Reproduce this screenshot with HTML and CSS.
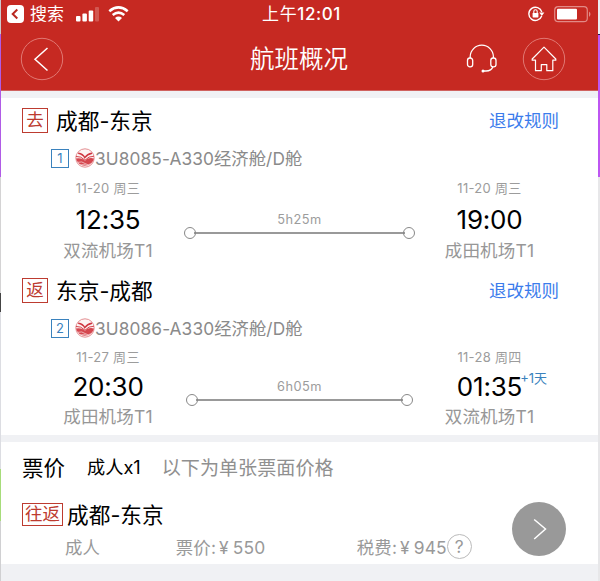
FILE: index.html
```html
<!DOCTYPE html>
<html lang="zh-CN">
<head>
<meta charset="utf-8">
<title>航班概况</title>
<link rel="stylesheet" href="styles.css">
</head>
<body>
<svg class="defs" aria-hidden="true">
  <symbol id="airline" viewBox="0 0 20 20">
    <circle cx="10" cy="10" r="9.2" fill="#fdf3f3" stroke="#e08488" stroke-width=".9"/>
    <path d="M1 10.5Q4.5 9.6 8.5 11.6L10 12.8 12 11Q15 9.4 19 10.4A9.2 9.2 0 0 1 1 10.5Z" fill="#d5474f"/>
    <path d="M3.2 5.2Q8 6 9.8 9.6 12.3 6 17 5.2" fill="none" stroke="#cf3640" stroke-width="1.4"/>
    <path d="M.9 8.4Q6 8 10 12.2 13.5 8 19 8.2" fill="none" stroke="#d5474f" stroke-width="1"/>
    <path d="M3 14.3Q7 13 10 15.5T16.5 15.6M5 17Q8 15.6 13.5 17.7" fill="none" stroke="#f5c9cc" stroke-width=".8"/>
  </symbol>
</svg>
<div class="screen">
  <div class="edge edge-left"><i class="e1"></i><i class="e2"></i><i class="e3"></i><i class="e4"></i><i class="e5"></i><i class="e6"></i><i class="e7"></i></div>
  <main class="app">
    <header class="header">
      <div class="status">
        <div class="status-left">
          <svg width="17" height="18" viewBox="0 0 17 18"><rect width="17" height="18" rx="4" fill="#fff"/><path d="M10.3 4.5 5.7 9l4.6 4.5" fill="none" stroke="#b9271f" stroke-width="2"/></svg>
          <span class="search">搜索</span>
          <svg class="signal" width="24" height="15" viewBox="0 0 24 15" fill="#fff"><rect y="9" width="4.5" height="5.5" rx="1"/><rect x="6.4" y="6.5" width="4.5" height="8" rx="1"/><rect x="12.7" y="3.5" width="4.5" height="11" rx="1"/><rect x="19" y="0" width="4" height="14.5" rx="1" opacity=".22"/></svg>
          <svg class="wifi" width="21" height="16" viewBox="0 0 21 16"><g fill="none" stroke="#fff" stroke-width="2.6"><path d="M1.3 5.2Q10.5-2.4 19.7 5.2"/><path d="M4.7 9Q10.5 4.4 16.3 9"/></g><path d="M7 12Q10.5 9.2 14 12L10.5 15.4Z" fill="#fff"/></svg>
        </div>
        <div class="clock">上午<span class="digits">12:01</span></div>
        <div class="status-right">
          <svg width="17" height="16" viewBox="0 0 17 16"><path d="M13.7 10A6.6 6.6 0 1 1 13.8 6" fill="none" stroke="#fff" stroke-width="1.4"/><path d="M11.2 6.5h5.2L13.8 10Z" fill="#fff"/><rect x="4.6" y="7" width="5.8" height="4.4" rx=".6" fill="#fff"/><path d="M5.8 7V5.5a1.7 1.7 0 0 1 3.4 0V7" fill="none" stroke="#fff" stroke-width="1.1"/></svg>
          <svg width="38" height="17" viewBox="0 0 38 17"><rect x=".7" y=".7" width="32.6" height="15" rx="3.5" fill="none" stroke="#e28a86" stroke-width="1.2"/><rect x="3" y="2.8" width="20" height="10.8" rx="1" fill="#fff"/><path d="M35 5.5q3 2.7 0 5.4Z" fill="#e28a86"/></svg>
        </div>
      </div>
      <nav class="nav">
        <svg class="back" width="44" height="44" viewBox="0 0 44 44" fill="none"><circle cx="22" cy="22" r="20.7" stroke="#e17873"/><path d="M27.5 11 15 22.2 27.5 33.5" stroke="#fff" stroke-width="1.5"/></svg>
        <h1 class="title">航班概况</h1>
        <div class="nav-right">
          <svg width="32" height="30" viewBox="0 0 32 30" fill="none" stroke="#fff" stroke-width="1.3"><path d="M4.2 14V12.8a11.6 11.6 0 0 1 23.2 0V14M27 22.5Q25.5 27 20 27H17"/><rect x="1.5" y="14" width="5.2" height="8.8" rx="2.4"/><rect x="24.8" y="14" width="5.2" height="8.8" rx="2.4"/><circle cx="17" cy="27" r="1.5" fill="#fff" stroke="none"/></svg>
          <svg width="44" height="44" viewBox="0 0 44 44" fill="none"><circle cx="22" cy="22" r="20.7" stroke="#e17873"/><path d="M10.2 22 22 10.2 33.8 22V23.2H30.8V33.7H24.8V27.6H19.3V33.7H13.5V23.2H10.2Z" stroke="#fff" stroke-width="1.2" stroke-linejoin="round"/></svg>
        </div>
      </nav>
    </header>

    <section class="card flights">
      <article class="flight">
        <div class="route-row"><span class="tag">去</span><h2 class="route">成都-东京</h2><a class="rules">退改规则</a></div>
        <div class="plane-row"><span class="num">1</span><svg class="logo"><use href="#airline"/></svg><span class="plane">3U8085-A330经济舱/D舱</span></div>
        <div class="times">
          <div class="stop"><div class="date">11-20 周三</div><div class="time">12:35</div><div class="airport">双流机场T1</div></div>
          <div class="leg"><span class="duration">5h25m</span><div class="track"></div></div>
          <div class="stop arrive"><div class="date">11-20 周三</div><div class="time">19:00</div><div class="airport">成田机场T1</div></div>
        </div>
      </article>
      <article class="flight compact">
        <div class="route-row"><span class="tag">返</span><h2 class="route">东京-成都</h2><a class="rules">退改规则</a></div>
        <div class="plane-row"><span class="num">2</span><svg class="logo"><use href="#airline"/></svg><span class="plane">3U8086-A330经济舱/D舱</span></div>
        <div class="times">
          <div class="stop"><div class="date">11-27 周三</div><div class="time">20:30</div><div class="airport">成田机场T1</div></div>
          <div class="leg"><span class="duration">6h05m</span><div class="track"></div></div>
          <div class="stop arrive"><div class="date">11-28 周四</div><div class="time"><span class="timebox">01:35<sup class="plus">+1天</sup></span></div><div class="airport">双流机场T1</div></div>
        </div>
      </article>
    </section>

    <section class="card fare">
      <div class="fare-info">
        <div class="fare-head"><h2 class="fare-title">票价</h2><span class="pax">成人x1</span><span class="note">以下为单张票面价格</span></div>
        <div class="fare-route"><span class="tag wide">往返</span><h2 class="route">成都-东京</h2></div>
        <div class="prices"><span class="adult">成人</span><span class="ticket">票价:<b class="yen">¥</b>550</span><span class="tax">税费:<b class="yen">¥</b>945</span><span class="help">?</span></div>
      </div>
      <svg class="next" width="54" height="54" viewBox="0 0 54 54"><circle cx="27" cy="27" r="27" fill="#999"/><path d="M22.2 17.5 33.5 27 22.2 37" fill="none" stroke="#fff" stroke-width="1.5"/></svg>
    </section>
  </main>
  <div class="edge edge-right"><i class="r1"></i><i class="r2"></i><i class="r3"></i></div>
</div>
</body>
</html>
```
FILE: styles.css
```css
* { box-sizing: border-box; }
body { margin: 0; font-family: Inter, "Noto Sans CJK SC", sans-serif; font-weight: 400; color: #000; white-space: nowrap; }
h1, h2 { margin: 0; font-weight: inherit; }
svg { display: block; flex: none; }
.defs { position: absolute; width: 0; height: 0; }
.screen { display: flex; width: 600px; height: 581px; overflow: hidden; background: #e9e9eb; }
.app { width: 597px; display: flex; flex-direction: column; background: #f0f1f4; }
.edge { display: flex; flex-direction: column; }
.edge-left { width: 1px; }
.edge-right { width: 2px; }
.e1 { height: 34px; background: #ccc8cb; }
.e2 { height: 143px; background: #b05be6; }
.e3 { height: 116px; background: #d4d3d4; }
.e4 { height: 19px; background: #444; }
.e5 { height: 157px; background: #dcdde2; }
.e6 { height: 52px; background: #a7dc7a; }
.e7 { flex: 1; background: #d0d0d2; }
.r1 { height: 34px; background: #ececf0; }
.r2 { height: 143px; background: #bd56f2; border-top: 1px solid #20184e; }
.r3 { flex: 1; background: #e7e7e9; }

.header { height: 91px; background: #c62922; border-bottom: 1px solid #cf625f; color: #fff; }
.status { height: 27px; display: grid; grid-template-columns: 1fr auto 1fr; align-items: center; padding: 1px 6px 0 6px; }
.status-left, .status-right { display: flex; align-items: center; }
.status-right { justify-content: flex-end; gap: 9px; }
.search { font-size: 17px; margin-left: 6px; line-height: 26px; }
.signal { margin-left: 12px; }
.wifi { margin-left: 8px; }
.clock { font-size: 17px; line-height: 26px; letter-spacing: .6px; margin-left: 4px; }
.digits { font-weight: 500; }
.nav { height: 63px; display: grid; grid-template-columns: 1fr auto 1fr; align-items: center; padding: 0 32px 0 19px; }
.title { font-size: 24.5px; line-height: 60px; margin-left: 12px; padding-top: 1px; font-weight: 350; }
.nav-right { display: flex; justify-content: flex-end; align-items: center; gap: 24px; padding-top: 1px; }

.card { background: #fff; padding-left: 21px; }
.flights { margin-top: 7px; height: 337px; }
.flight { margin-bottom: 2px; }
.route-row { display: flex; align-items: center; height: 45px; padding-right: 39px; }
.tag { width: 26px; height: 25px; border: 1.5px solid #bd3b30; color: #bd3b30; font-size: 17.5px; line-height: 22px; text-align: center; flex: none; }
.wide { width: 41px; height: 23px; line-height: 20px; }
.route { font-size: 21.7px; margin-left: 8px; line-height: 40px; }
.rules { margin-left: auto; font-size: 17.5px; color: #3b7cec; padding-bottom: 3px; }
.plane-row { display: flex; align-items: center; height: 30px; padding-left: 29px; }
.num { width: 18px; height: 19px; border: 1.3px solid #3a82bd; color: #3a82bd; font-size: 13px; line-height: 17px; text-align: center; flex: none; }
.logo { width: 20px; height: 20px; margin-left: 6px; }
.plane { font-size: 17.3px; color: #8a8a8a; letter-spacing: .1px; padding-bottom: 2px; }
.times { display: flex; padding-left: 10px; }
.stop { width: 152px; text-align: center; }
.arrive { width: 149px; }
.date { height: 31px; line-height: 31px; font-size: 13px; color: #9c9c9c; letter-spacing: .3px; }
.time { height: 32px; line-height: 32px; font-size: 26px; letter-spacing: -.2px; }
.airport { height: 30px; line-height: 30px; font-size: 17.5px; letter-spacing: .2px; color: #979797; }
.leg { width: 231px; padding-top: 39px; display: flex; flex-direction: column; align-items: center; }
.duration { font-size: 12.8px; line-height: 16px; color: #9c9c9c; letter-spacing: .5px; }
.track { width: 100%; height: 10px; display: flex; align-items: center; justify-content: space-between; background: linear-gradient(#999, #999) center / calc(100% - 20px) 2px no-repeat; }
.track::before, .track::after { content: ""; width: 10px; height: 10px; border: 1.6px solid #888; border-radius: 50%; flex: none; }
.compact .date { height: 28px; line-height: 28px; }
.compact .time { height: 31px; line-height: 31px; }
.compact .leg { padding-top: 36px; }
.compact .track { width: 227px; }
.timebox { position: relative; }
.plus { position: absolute; left: calc(100% - 2px); top: 0; font-size: 13px; line-height: 14px; color: #3a82bd; letter-spacing: 0; }

.fare { margin-top: 7px; height: 122px; display: flex; justify-content: space-between; padding-right: 32px; }
.fare-head { display: flex; align-items: center; height: 51px; padding-bottom: 2px; }
.fare-title { font-size: 21.5px; }
.pax { margin-left: 22px; font-size: 18.2px; padding-bottom: 1px; }
.note { margin-left: 21px; font-size: 19.1px; color: #909090; }
.fare-route { display: flex; align-items: center; height: 43px; }
.fare-route .route { margin-left: 4px; }
.prices { display: flex; align-items: center; height: 20px; padding-left: 43px; font-size: 17.4px; color: #999; }
.ticket { margin-left: 76px; width: 181px; letter-spacing: .15px; }
.tax { letter-spacing: .15px; }
.yen { font-weight: 400; margin: 0 4px 0 3px; font-size: 17.4px; }
.help { width: 25px; height: 25px; border: 1px solid #bbb; border-radius: 50%; line-height: 23px; text-align: center; }
.next { margin-top: 60px; }
```
